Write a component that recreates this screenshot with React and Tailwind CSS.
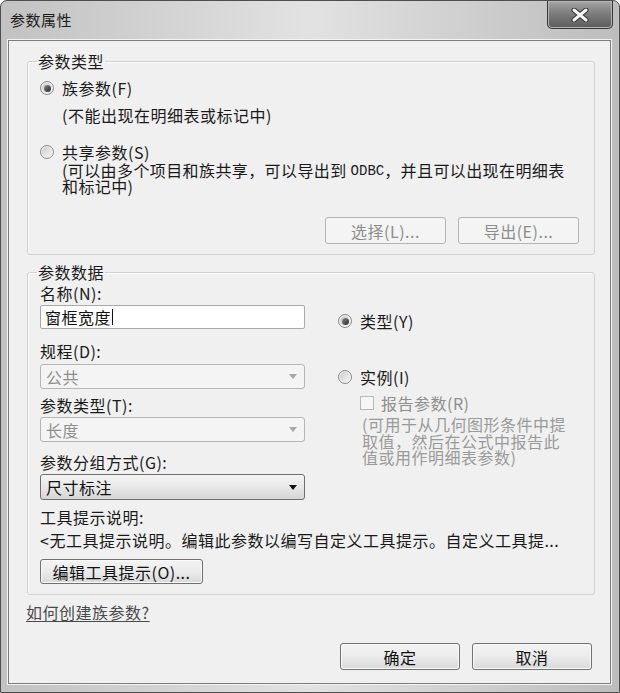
import React from 'react';

const Radio = ({ checked }) => (
  <span className="flex h-[14px] w-[14px] shrink-0 items-center justify-center rounded-full border border-[#8a8a8a] bg-gradient-to-br from-[#c8c8c8] to-[#fbfbfb] shadow-[inset_0_0_0_1px_#f2f2f2]">
    {checked && (
      <span className="h-[7px] w-[7px] rounded-full bg-gradient-to-br from-[#8a8a8a] to-[#2a2a2a]" />
    )}
  </span>
);

const Arrow = ({ color }) => (
  <svg width="8" height="5" viewBox="0 0 8 5" className="shrink-0">
    <path d="M0 0 L8 0 L4 5 Z" fill={color} />
  </svg>
);

const Select = ({ value, disabled }) =>
  disabled ? (
    <div className="flex h-[25px] w-[265px] items-center justify-between rounded-[3px] border border-[#b5b5b5] bg-[#f4f4f4] pl-[5px] pr-[7px] text-[#8e8e8e]">
      <span>{value}</span>
      <Arrow color="#a8a8a8" />
    </div>
  ) : (
    <div className="flex h-[26px] w-[265px] items-center justify-between rounded-[3px] border border-[#6f6f6f] bg-gradient-to-b from-[#f4f4f4] via-[#e8e8e8] to-[#d6d6d6] pl-[5px] pr-[7px] text-[#111]">
      <span>{value}</span>
      <Arrow color="#111" />
    </div>
  );

const Button = ({ children, disabled, className = '' }) => (
  <div
    className={
      disabled
        ? `flex items-center justify-center rounded-[3px] border border-[#b3b3b3] bg-[#f4f4f4] text-[#8c8c8c] ${className}`
        : `flex items-center justify-center rounded-[3px] border border-[#707070] bg-gradient-to-b from-[#f3f3f3] via-[#ebebeb] to-[#d9d9d9] text-[#111] shadow-[inset_0_0_0_1px_#fbfbfb] ${className}`
    }
  >
    {children}
  </div>
);

const App = () => {
  return (
    <div className="h-[693px] w-[620px] bg-white font-['Noto_Sans_CJK_SC','Liberation_Sans',sans-serif] text-[16px] leading-[20px] tracking-[0.5px] text-[#1a1a1a]">
      <div className="flex h-[693px] w-[620px] flex-col rounded-t-[7px] border border-[#4e4e4e] bg-gradient-to-r from-[#c2c2c2] via-[#e2e2e2] to-[#bdbdbd]">
        {/* title bar */}
        <div className="flex h-[39px] items-start justify-between">
          <div className="ml-[9px] mt-[9px] text-[15px] leading-[20px] text-[#1c1c1c]">参数属性</div>
          <div className="mr-[6px] flex h-[28px] w-[66px] items-center justify-center rounded-b-[5px] border border-t-0 border-[#383838] bg-gradient-to-b from-[#a6a6a6] via-[#7a7a7a] to-[#5c5c5c] shadow-[inset_0_0_0_1px_#b4b4b4]">
            <svg width="18" height="14" viewBox="0 0 18 14">
              <path d="M3 2 L15 12 M15 2 L3 12" stroke="#333" strokeWidth="5" strokeLinecap="round" />
              <path d="M3 2 L15 12 M15 2 L3 12" stroke="#f4f4f4" strokeWidth="3" strokeLinecap="round" />
            </svg>
          </div>
        </div>

        {/* client area */}
        <div className="ml-[7px] flex h-[644px] w-[603px] flex-col border border-[#7c7c7c] bg-[#f0f0f0] shadow-[0_0_0_1px_#f4f4f4]">
          <fieldset className="ml-[18px] mt-[10px] w-[568px] rounded-[3px] border border-[#d0d0d0] pb-[10px] pl-[12px] pr-[15px] shadow-[inset_1px_1px_0_#fff]">
            <legend className="-ml-[3px] px-[1px] leading-[20px]">参数类型</legend>
            <div className="mt-[7px] flex h-[20px] items-center gap-[8px]">
              <Radio checked />
              <span>族参数(F)</span>
            </div>
            <div className="mt-[7px] h-[20px] pl-[22px]">(不能出现在明细表或标记中)</div>
            <div className="mt-[17px] flex h-[20px] items-center gap-[8px]">
              <Radio />
              <span>共享参数(S)</span>
            </div>
            <div className="h-[32px] whitespace-nowrap pl-[22px] leading-[16px] tracking-[0.4px]">
              (可以由多个项目和族共享，可以导出到{' '}
              <span className="inline-block h-[16px] align-top font-['Liberation_Mono',monospace] text-[14px] leading-[19px] tracking-normal">
                ODBC
              </span>
              ，并且可以出现在明细表
              <br />
              和标记中)
            </div>
            <div className="mt-[23px] flex justify-end gap-[12px]">
              <Button disabled className="h-[27px] w-[121px]">选择(L)...</Button>
              <Button disabled className="h-[27px] w-[121px]">导出(E)...</Button>
            </div>
          </fieldset>

          <fieldset className="ml-[18px] mt-[7px] w-[568px] rounded-[3px] border border-[#d0d0d0] pb-[10px] pl-[12px] pr-[15px] shadow-[inset_1px_1px_0_#fff]">
            <legend className="-ml-[3px] px-[1px] leading-[20px]">参数数据</legend>
            <div className="flex">
              <div className="flex w-[265px] flex-col">
                <div className="mt-[1px] h-[20px]">名称(N):</div>
                <div className="mt-[2px] flex h-[24px] items-center rounded-[2px] border border-[#a9a9a9] bg-white pl-[4px] text-[#111]">
                  窗框宽度<span className="ml-[1px] inline-block h-[16px] w-[1px] bg-[#111]" />
                </div>
                <div className="mt-[12px] h-[20px]">规程(D):</div>
                <div className="mt-[3px]">
                  <Select value="公共" disabled />
                </div>
                <div className="mt-[6px] h-[20px]">参数类型(T):</div>
                <div className="mt-[2px]">
                  <Select value="长度" disabled />
                </div>
                <div className="mt-[10px] h-[20px]">参数分组方式(G):</div>
                <div className="mt-[2px]">
                  <Select value="尺寸标注" />
                </div>
                <div className="mt-[7px] h-[20px]">工具提示说明:</div>
                <div className="mt-[3px] h-[20px] whitespace-nowrap">
                  &lt;无工具提示说明。编辑此参数以编写自定义工具提示。自定义工具提...
                </div>
                <Button className="mt-[9px] h-[25px] w-[163px]">编辑工具提示(O)...</Button>
              </div>

              <div className="ml-[33px] flex flex-col">
                <div className="mt-[29px] flex h-[20px] items-center gap-[8px]">
                  <Radio checked />
                  <span>类型(Y)</span>
                </div>
                <div className="mt-[36px] flex h-[20px] items-center gap-[8px]">
                  <Radio />
                  <span>实例(I)</span>
                </div>
                <div className="ml-[22px] mt-[6px] flex h-[20px] items-center gap-[7px] text-[#8e8e8e]">
                  <span className="h-[14px] w-[14px] border border-[#b8b8b8] bg-[#f6f6f6]" />
                  <span>报告参数(R)</span>
                </div>
                <div className="ml-[24px] mt-[3px] leading-[16.5px] text-[#9a9a9a]">
                  (可用于从几何图形条件中提
                  <br />
                  取值，然后在公式中报告此
                  <br />
                  值或用作明细表参数)
                </div>
              </div>
            </div>
          </fieldset>

          <div className="ml-[17px] mt-[7px] h-[20px] text-[#4a4a4a] underline underline-offset-2">
            如何创建族参数?
          </div>

          <div className="mr-[18px] mt-[21px] flex justify-end gap-[12px]">
            <Button className="h-[27px] w-[120px]">确定</Button>
            <Button className="h-[27px] w-[120px]">取消</Button>
          </div>
        </div>
      </div>
    </div>
  );
};

export default App;
